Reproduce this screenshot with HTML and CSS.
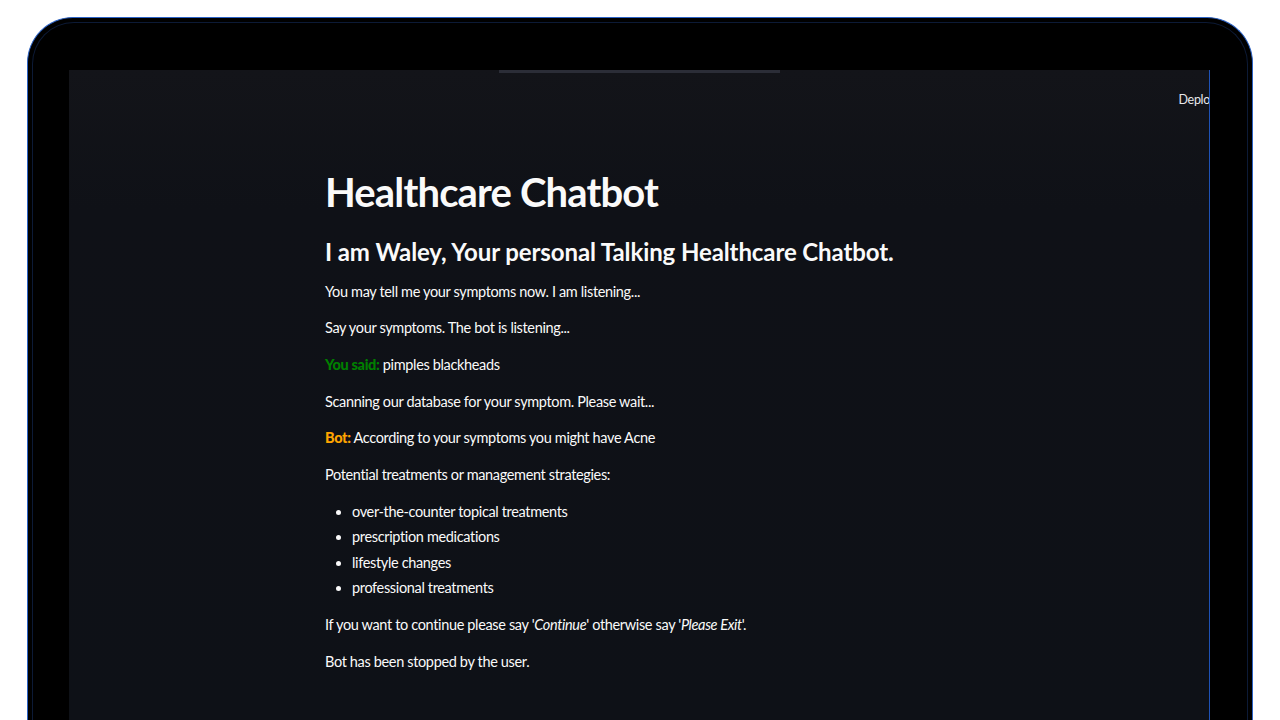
FILE: index.html
```html
<!DOCTYPE html>
<html>
<head>
<meta charset="utf-8">
<link rel="stylesheet" href="styles.css">
</head>
<body>
<div class="device">
  <div class="screen">
    <div class="topline"></div>
    <header class="app-header"><span class="deploy">Deploy</span></header>
    <main class="content">
      <h1 class="title">Healthcare Chatbot</h1>
      <h2 class="subtitle">I am Waley, Your personal Talking Healthcare Chatbot.</h2>
      <p class="msg">You may tell me your symptoms now. I am listening...</p>
      <p class="msg">Say your symptoms. The bot is listening...</p>
      <p class="msg"><strong class="you">You said:</strong> pimples blackheads</p>
      <p class="msg">Scanning our database for your symptom. Please wait...</p>
      <p class="msg"><strong class="bot">Bot:</strong> According to your symptoms you might have Acne</p>
      <p class="msg">Potential treatments or management strategies:</p>
      <ul class="list">
        <li>over-the-counter topical treatments</li>
        <li>prescription medications</li>
        <li>lifestyle changes</li>
        <li>professional treatments</li>
      </ul>
      <p class="msg">If you want to continue please say '<em>Continue</em>' otherwise say '<em>Please Exit</em>'.</p>
      <p class="msg">Bot has been stopped by the user.</p>
    </main>
  </div>
</div>
</body>
</html>
```
FILE: styles.css
```css
html, body {
  margin: 0;
  padding: 0;
  background: #ffffff;
  overflow: hidden;
  height: 720px;
}
.device {
  margin: 17px 0 0 27px;
  width: 1226px;
  height: 703px;
  box-sizing: border-box;
  background: #000;
  border: 1px solid #2c63c6;
  border-bottom: none;
  border-radius: 46px 46px 0 0;
  position: relative;
  padding: 52px 42px 0 41px;
}
.device::before {
  content: "";
  position: absolute;
  left: 4px; right: 4px; top: 4px; bottom: 0;
  border: 1px solid #0c1a36;
  border-bottom: none;
  border-radius: 42px 42px 0 0;
  pointer-events: none;
}
.screen {
  height: 100%;
  background: linear-gradient(#131419 0, #0f1117 140px, #0e1117 100%);
  border-right: 1px solid #1e52b6;
  font-family: Lato, "Liberation Sans", sans-serif;
  color: #fafafa;
  overflow: hidden;
}
.topline {
  margin-left: 430px;
  width: 281px;
  height: 3px;
  background: #2b2d37;
}
.app-header {
  height: 57px;
  display: flex;
  justify-content: flex-end;
  align-items: flex-start;
  overflow: hidden;
}
.deploy {
  font-size: 12.5px;
  font-weight: 400;
  letter-spacing: -0.3px;
  margin-right: -7px;
  margin-top: 21px;
  line-height: 1;
  color: #e8e8ea;
  white-space: nowrap;
}
.content {
  width: 628px;
  margin: 0 auto;
  padding-top: 38px;
}
.title {
  font-size: 40px;
  font-weight: 700;
  letter-spacing: -0.85px;
  margin: 0 0 19px 0;
  line-height: 48px;
}
.subtitle {
  font-size: 24px;
  font-weight: 700;
  letter-spacing: -0.1px;
  margin: 0 0 10px 0;
  line-height: 1.4;
}
.msg {
  font-size: 14.5px;
  letter-spacing: -0.35px;
  line-height: 25px;
  margin: 0 0 11.7px 0;
}
.you { color: #008000; font-weight: 900; }
.bot { color: #ffa500; font-weight: 900; }
.list {
  margin: 0 0 11.7px 0;
  padding-left: 27px;
  font-size: 14.5px;
  letter-spacing: -0.35px;
  line-height: 25.5px;
}
```
